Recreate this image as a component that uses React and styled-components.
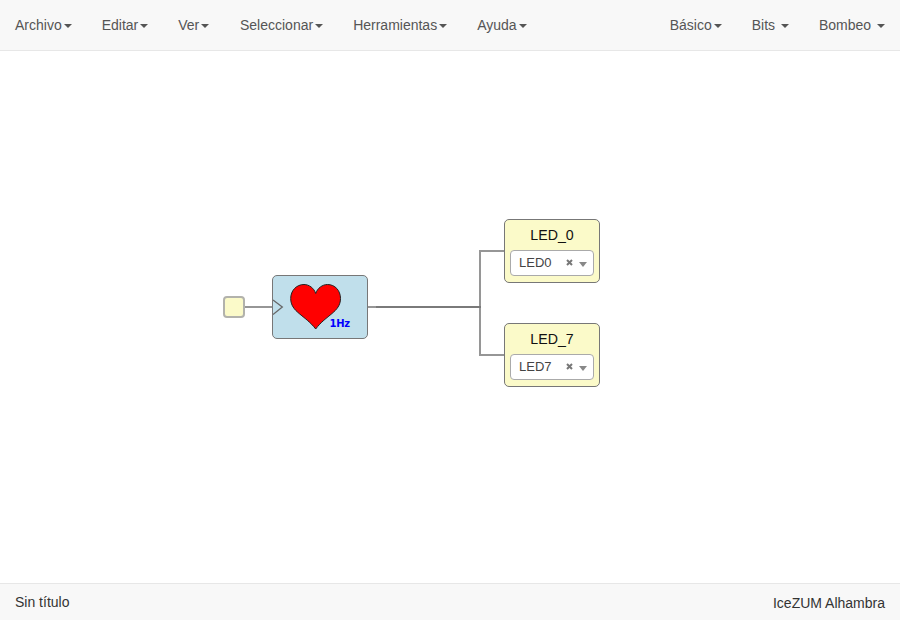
import React from "react";
import styled, { createGlobalStyle } from "styled-components";

const GlobalStyle = createGlobalStyle`
  * { box-sizing: border-box; }
  body {
    margin: 0;
    font-family: "Liberation Sans", Arial, sans-serif;
    font-size: 14px;
    line-height: 20px;
    color: #333;
    background: #fff;
  }
`;

const Page = styled.div`
  display: flex;
  flex-direction: column;
  height: 100vh;
  overflow: hidden;
`;

const Navbar = styled.nav`
  display: flex;
  justify-content: space-between;
  flex: none;
  height: 51px;
  background: #f8f8f8;
  border-bottom: 1px solid #e7e7e7;
`;

const MenuGroup = styled.ul`
  display: flex;
  margin: 0;
  padding: 0;
  list-style: none;
`;

const MenuItem = styled.li`
  padding: 15px;
  padding-left: ${(p) => (p.$wide ? 15.7 : 15)}px;
  color: #555;
  white-space: pre;
  cursor: pointer;
`;

const Caret = styled.span`
  display: inline-block;
  margin-left: 2px;
  vertical-align: middle;
  border-top: 4px solid currentColor;
  border-left: 4px solid transparent;
  border-right: 4px solid transparent;
`;

const Canvas = styled.main`
  position: relative;
  flex: 1;
`;

const Wires = styled.svg`
  position: absolute;
  inset: 0;
  width: 100%;
  height: 100%;
  fill: none;
  stroke: #969696;
  stroke-width: 2;
`;

const Node = styled.div`
  position: absolute;
  left: ${(p) => p.$x}px;
  top: ${(p) => p.$y}px;
  border: 1px solid #777;
  border-radius: 5px;
`;

const ClockInput = styled(Node)`
  width: 22px;
  height: 22px;
  background: #fbfac9;
  border: 2px solid #b2b2ac;
  border-radius: 4px;
`;

const HeartBlock = styled(Node)`
  width: 96px;
  height: 64px;
  background: #c0dfeb;
`;

const HeartArt = styled.svg`
  display: block;
  width: 94px;
  height: 62px;
`;

const OutputBlock = styled(Node)`
  display: flex;
  flex-direction: column;
  width: 96px;
  height: 64px;
  padding: 5px;
  background: #fbfac9;
`;

const OutputLabel = styled.div`
  height: 25px;
  color: #111;
  font-size: 14.2px;
  text-align: center;
`;

const PinSelect = styled.div`
  display: flex;
  align-items: center;
  height: 26px;
  padding: 0 6px 0 8px;
  background: #fff;
  border: 1px solid #aaa;
  border-radius: 4px;
  color: #444;
  font-size: 13px;
`;

const PinName = styled.span`
  flex: 1;
`;

const Clear = styled.svg`
  width: 7px;
  height: 7px;
  margin: 0 6px 1px 0;
  fill: none;
  stroke: #777;
  stroke-width: 2;
`;

const Arrow = styled.span`
  margin-top: 2px;
  border-top: 5px solid #888;
  border-left: 4px solid transparent;
  border-right: 4px solid transparent;
`;

const Footer = styled.footer`
  display: flex;
  justify-content: space-between;
  flex: none;
  height: 37px;
  padding: 8px 15px;
  background: #f8f8f8;
  border-top: 1px solid #e7e7e7;
`;

const Board = styled.span`
  padding-top: 1px;
`;

const leftMenus = ["Archivo", "Editar", "Ver", "Seleccionar", "Herramientas", "Ayuda"];
const rightMenus = ["Básico", "Bits ", "Bombeo "];
const outputs = [
  { label: "LED_0", pin: "LED0", x: 504, y: 168 },
  { label: "LED_7", pin: "LED7", x: 504, y: 272 },
];

const Menus = ({ items }) => (
  <MenuGroup>
    {items.map((item) => (
      <MenuItem key={item} $wide={item === "Seleccionar"}>
        {item}
        <Caret />
      </MenuItem>
    ))}
  </MenuGroup>
);

export default function App() {
  return (
    <Page>
      <GlobalStyle />
      <Navbar>
        <Menus items={leftMenus} />
        <Menus items={rightMenus} />
      </Navbar>
      <Canvas>
        <Wires>
          <path d="M244 256H272M368 256H376M480 256V200H504M480 256V304H504" />
          <path d="M376 256H481" stroke="#7a7a7a" />
        </Wires>
        <ClockInput $x={223} $y={245} />
        <HeartBlock $x={272} $y={224}>
          <HeartArt viewBox="0 0 94 62">
            <path d="M0 24L9.300 31L0 38.500" fill="none" stroke="#666" strokeWidth="1.3" />
            <path
              d="M42.700 17.500C41 12 36 8.500 31 8.500C23.500 8.500 17.700 14.500 17.700 22.500C17.700 36 32 39 42.700 53C53 39 67.500 36 67.500 22.500C67.500 14.500 62 8.500 54.500 8.500C49.500 8.500 44.500 12 42.700 17.500Z"
              fill="#f00"
              stroke="#222"
            />
            <text
              x="56.5"
              y="51"
              fill="#00f"
              fontFamily="DejaVu Sans, sans-serif"
              fontSize="10"
              fontWeight="bold"
              textLength="20.5"
            >
              1Hz
            </text>
          </HeartArt>
        </HeartBlock>
        {outputs.map((o) => (
          <OutputBlock key={o.label} $x={o.x} $y={o.y}>
            <OutputLabel>{o.label}</OutputLabel>
            <PinSelect>
              <PinName>{o.pin}</PinName>
              <Clear viewBox="0 0 7 7">
                <path d="M1 1L6 6M6 1L1 6" />
              </Clear>
              <Arrow />
            </PinSelect>
          </OutputBlock>
        ))}
      </Canvas>
      <Footer>
        <span>Sin título</span>
        <Board>IceZUM Alhambra</Board>
      </Footer>
    </Page>
  );
}
